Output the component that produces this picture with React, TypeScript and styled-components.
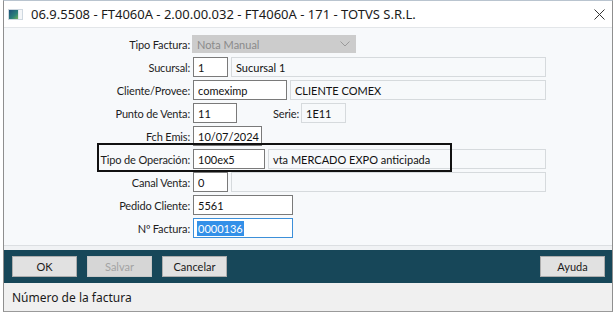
import React from 'react';
import styled, { createGlobalStyle } from 'styled-components';

const GlobalStyle = createGlobalStyle`
  html, body {
    margin: 0;
    padding: 0;
    background: #ffffff;
  }
  body {
    font-family: 'Noto Sans', 'Open Sans', Arial, sans-serif;
  }
`;

type FieldRow = {
  label: string;
  value: string;
  width: number;
  extra?: string;
  selected?: boolean;
};

const rows: FieldRow[] = [
  { label: 'Sucursal:', value: '1', width: 35, extra: 'Sucursal 1' },
  { label: 'Cliente/Provee:', value: 'comeximp', width: 94, extra: 'CLIENTE COMEX' },
  { label: 'Punto de Venta:', value: '11', width: 44 },
  { label: 'Fch Emis:', value: '10/07/2024', width: 69 },
  { label: 'Tipo de Operación:', value: '100ex5', width: 72, extra: 'vta MERCADO EXPO anticipada' },
  { label: 'Canal Venta:', value: '0', width: 35, extra: '' },
  { label: 'Pedido Cliente:', value: '5561', width: 100 },
  { label: 'Nº Factura:', value: '0000136', width: 100, selected: true },
];

const AppIcon = () => (
  <svg width="15" height="11" viewBox="0 0 15 11">
    <defs>
      <linearGradient id="ic" x1="0" y1="0" x2="1" y2="1">
        <stop offset="0" stopColor="#1d4e7a" />
        <stop offset="0.6" stopColor="#2a7f7a" />
        <stop offset="1" stopColor="#6fb05a" />
      </linearGradient>
    </defs>
    <rect x="0" y="0" width="15" height="11" fill="#cfd8e0" />
    <rect x="1" y="1" width="9" height="9" fill="url(#ic)" />
    <rect x="10.5" y="1" width="3.5" height="9" fill="#f4f6f8" />
  </svg>
);

const CloseIcon = () => (
  <svg width="11" height="11" viewBox="0 0 11 11">
    <path d="M0.5 0.5 L10.5 10.5 M10.5 0.5 L0.5 10.5" stroke="#333" strokeWidth="1" />
  </svg>
);

const Chevron = () => (
  <svg width="10" height="6" viewBox="0 0 10 6">
    <path d="M0.5 0.5 L5 5 L9.5 0.5" fill="none" stroke="#9a9a9a" strokeWidth="1" />
  </svg>
);

const App = () => {
  return (
    <>
      <GlobalStyle />
      <Window>
        <TitleBar>
          <TitleLeft>
            <AppIcon />
            <TitleText>06.9.5508 - FT4060A - 2.00.00.032 - FT4060A - 171 - TOTVS S.R.L.</TitleText>
          </TitleLeft>
          <CloseButton>
            <CloseIcon />
          </CloseButton>
        </TitleBar>

        <FormPanel>
          <ComboRow>
            <Label>Tipo Factura:</Label>
            <Combo>
              <span>Nota Manual</span>
              <Chevron />
            </Combo>
          </ComboRow>

          {rows.map((row) => (
            <Row key={row.label}>
              <Label>{row.label}</Label>
              <Input $width={row.width} $selected={row.selected}>
                {row.selected ? <Selection>{row.value}</Selection> : row.value}
              </Input>
              {row.label === 'Punto de Venta:' && (
                <>
                  <SerieLabel>Serie:</SerieLabel>
                  <SerieBox>1E11</SerieBox>
                </>
              )}
              {row.extra !== undefined && <DescBox>{row.extra}</DescBox>}
            </Row>
          ))}

          <Highlight />
        </FormPanel>

        <Separator />

        <ButtonBar>
          <ButtonGroup>
            <Button>OK</Button>
            <Button disabled>Salvar</Button>
            <Button>Cancelar</Button>
          </ButtonGroup>
          <Button>Ayuda</Button>
        </ButtonBar>

        <StatusBar>Número de la factura</StatusBar>
      </Window>
    </>
  );
};

const Window = styled.div`
  margin-left: 3px;
  width: 610px;
  height: 312px;
  box-sizing: border-box;
  border-left: 1px solid #8f8f8f;
  border-right: 1px solid #8f8f8f;
  border-bottom: 1px solid #9a9a9a;
  border-top: 1px solid #b9c4cf;
  background: #f7f9fb;
  display: flex;
  flex-direction: column;
`;

const TitleBar = styled.div`
  height: 26px;
  flex: none;
  background: #ffffff;
  border-bottom: 1px solid #e3e6e9;
  display: flex;
  align-items: center;
  justify-content: space-between;
  padding: 0 0 0 4px;
`;

const TitleLeft = styled.div`
  display: flex;
  align-items: center;
  gap: 8px;
`;

const TitleText = styled.span`
  font-size: 13px;
  color: #1a1a1a;
  white-space: nowrap;
`;

const CloseButton = styled.div`
  width: 26px;
  display: flex;
  justify-content: center;
`;

const FormPanel = styled.div`
  position: relative;
  height: 217px;
  flex: none;
  box-sizing: border-box;
  padding: 7px 0 0 0;
  display: flex;
  flex-direction: column;
  gap: 3px;
`;

const Row = styled.div`
  display: flex;
  align-items: center;
  height: 20px;
  flex: none;
`;

const ComboRow = styled(Row)`
  height: 18px;
  margin-bottom: 1px;
`;

const Label = styled.div`
  width: 186px;
  margin-right: 3px;
  text-align: right;
  font-family: Lato, 'Noto Sans', sans-serif;
  font-size: 11px;
  letter-spacing: -0.15px;
  color: #1e1e1e;
  white-space: nowrap;
`;

const SerieLabel = styled(Label)`
  width: 62px;
  margin-right: 2px;
`;

const Combo = styled.div`
  width: 164px;
  height: 18px;
  box-sizing: border-box;
  margin-left: -1px;
  background: #cccccc;
  display: flex;
  align-items: center;
  justify-content: space-between;
  padding: 0 6px 0 5px;
  font-family: Lato, 'Noto Sans', sans-serif;
  font-size: 11px;
  color: #8a8a8a;
`;

const BaseBox = styled.div`
  height: 20px;
  box-sizing: border-box;
  display: flex;
  align-items: center;
  padding: 0 4px;
  font-family: Lato, 'Noto Sans', sans-serif;
  font-size: 11px;
  color: #111;
  white-space: nowrap;
  overflow: hidden;
`;

const Input = styled(BaseBox)<{ $width: number; $selected?: boolean }>`
  width: ${(p) => p.$width}px;
  background: #ffffff;
  border: 1px solid ${(p) => (p.$selected ? '#3c8fd9' : '#7a7a7a')};
  padding-left: ${(p) => (p.$selected ? '3px' : '4px')};
`;

const ReadOnlyBox = styled(BaseBox)`
  background: #f7f9fb;
  border: 1px solid #d6dadd;
`;

const SerieBox = styled(ReadOnlyBox)`
  width: 45px;
`;

const DescBox = styled(ReadOnlyBox)`
  flex: 1;
  margin-left: 3px;
  margin-right: 66px;
`;

const Selection = styled.span`
  background: #3390e8;
  color: #ffffff;
  line-height: 15px;
  padding: 0 1px;
`;

const Highlight = styled.div`
  position: absolute;
  left: 93px;
  top: 115px;
  width: 355px;
  height: 29px;
  box-sizing: border-box;
  border: 2px solid #111111;
  pointer-events: none;
`;

const Separator = styled.div`
  height: 4px;
  flex: none;
  border-top: 1px solid #dcdfe2;
  background: #f0f2f4;
`;

const ButtonBar = styled.div`
  height: 33px;
  flex: none;
  background: #174759;
  display: flex;
  align-items: center;
  justify-content: space-between;
  padding: 0 7px 0 8px;
  box-sizing: border-box;
`;

const ButtonGroup = styled.div`
  display: flex;
  gap: 10px;
`;

const Button = styled.button`
  width: 65px;
  height: 21px;
  box-sizing: border-box;
  background: #e1e1e1;
  border: 1px solid #adadad;
  font-family: Lato, 'Noto Sans', sans-serif;
  font-size: 11px;
  color: #1a1a1a;
  padding: 0;

  &:disabled {
    background: #d6d6d6;
    color: #a3a3a3;
    border-color: #c8c8c8;
  }
`;

const StatusBar = styled.div`
  flex: 1;
  background: #f0f0f0;
  display: flex;
  align-items: center;
  padding-left: 8px;
  font-size: 12px;
  color: #1a1a1a;
`;

export default App;
